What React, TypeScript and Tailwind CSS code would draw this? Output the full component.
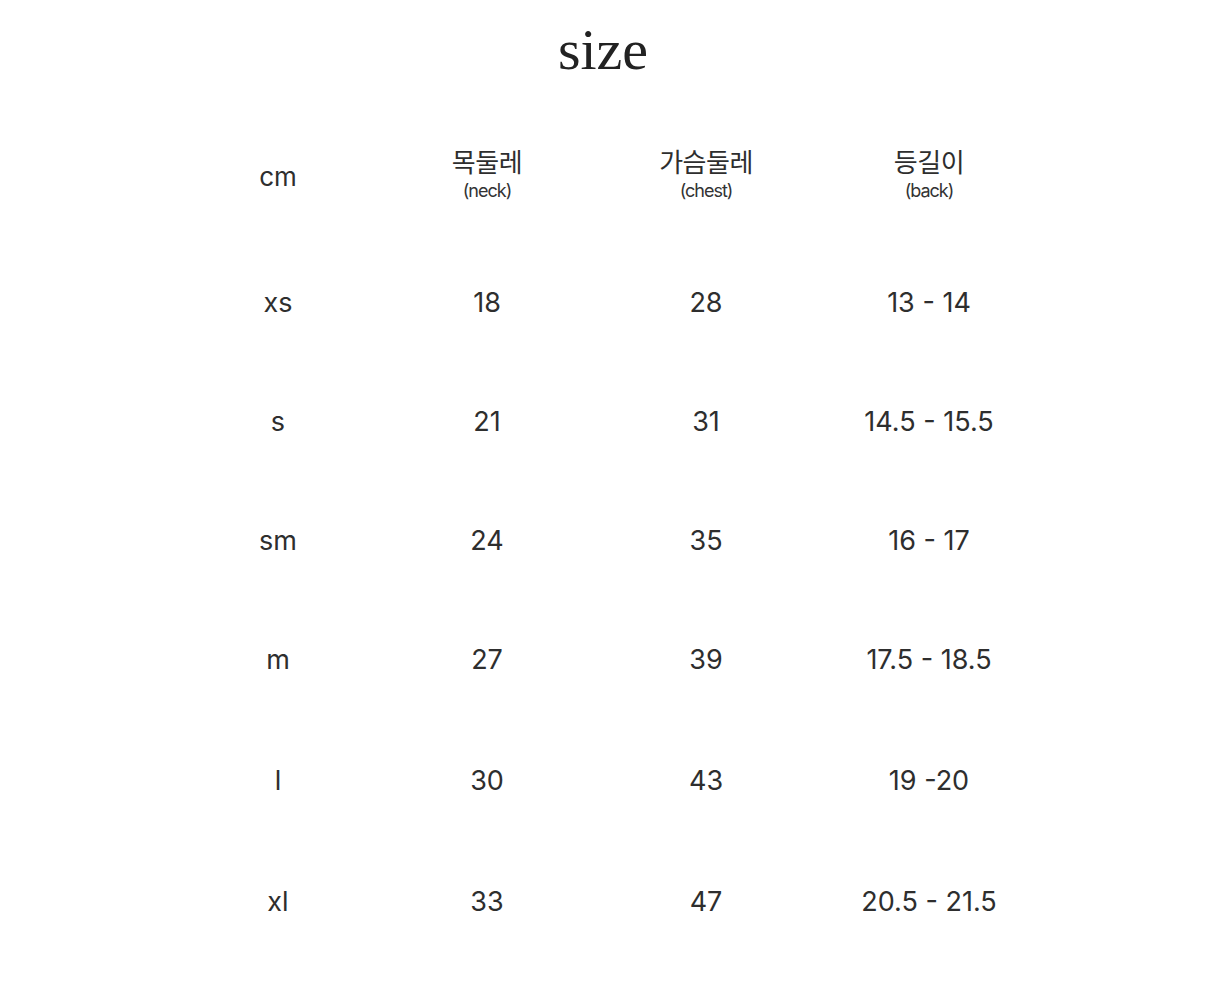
import React from "react";

const rows = [
  ["xs", "18", "28", "13 - 14"],
  ["s", "21", "31", "14.5 - 15.5"],
  ["sm", "24", "35", "16 - 17"],
  ["m", "27", "39", "17.5 - 18.5"],
  ["l", "30", "43", "19 -20"],
  ["xl", "33", "47", "20.5 - 21.5"],
];

const headers: [string, string][] = [
  ["목둘레", "(neck)"],
  ["가슴둘레", "(chest)"],
  ["등길이", "(back)"],
];

const heights = ["h-[119px]", "h-[119px]", "h-[119px]", "h-[118px]", "h-[124px]", "h-[119px]"];

export default function App() {
  return (
    <div className="w-[1206px] h-[986px] bg-white text-[#2e2e2e] overflow-hidden" style={{ fontFamily: "Inter, 'Noto Sans CJK KR', sans-serif" }}>
      <div className="pt-[14px] flex justify-center">
        <h1 className="text-[58px] leading-[72px] text-[#222]" style={{ fontFamily: "'Liberation Serif', serif" }}>size</h1>
      </div>
      <div className="ml-[173px] mt-[31px]">
        <div className="grid grid-cols-[210px_208px_230px_216px] h-[120px] items-center">
          <div className="text-center text-[26px] -mt-[2px]">cm</div>
          {headers.map(([k, e]) => (
            <div key={k} className="flex flex-col items-center -mt-[8px]">
              <div className="text-[26px] leading-[32px] tracking-[-0.5px]">{k}</div>
              <div className="mt-[3px] text-[18px] leading-[18px] tracking-[-1px] text-[#333]">{e}</div>
            </div>
          ))}
        </div>
        <div className="mt-[7px]">
          {rows.map((r, idx) => (
            <div key={r[0]} className={`grid grid-cols-[210px_208px_230px_216px] items-center text-[27px] ${heights[idx]}`}>
              {r.map((c, i) => (
                <div key={i} className="text-center">{c}</div>
              ))}
            </div>
          ))}
        </div>
      </div>
    </div>
  );
}
